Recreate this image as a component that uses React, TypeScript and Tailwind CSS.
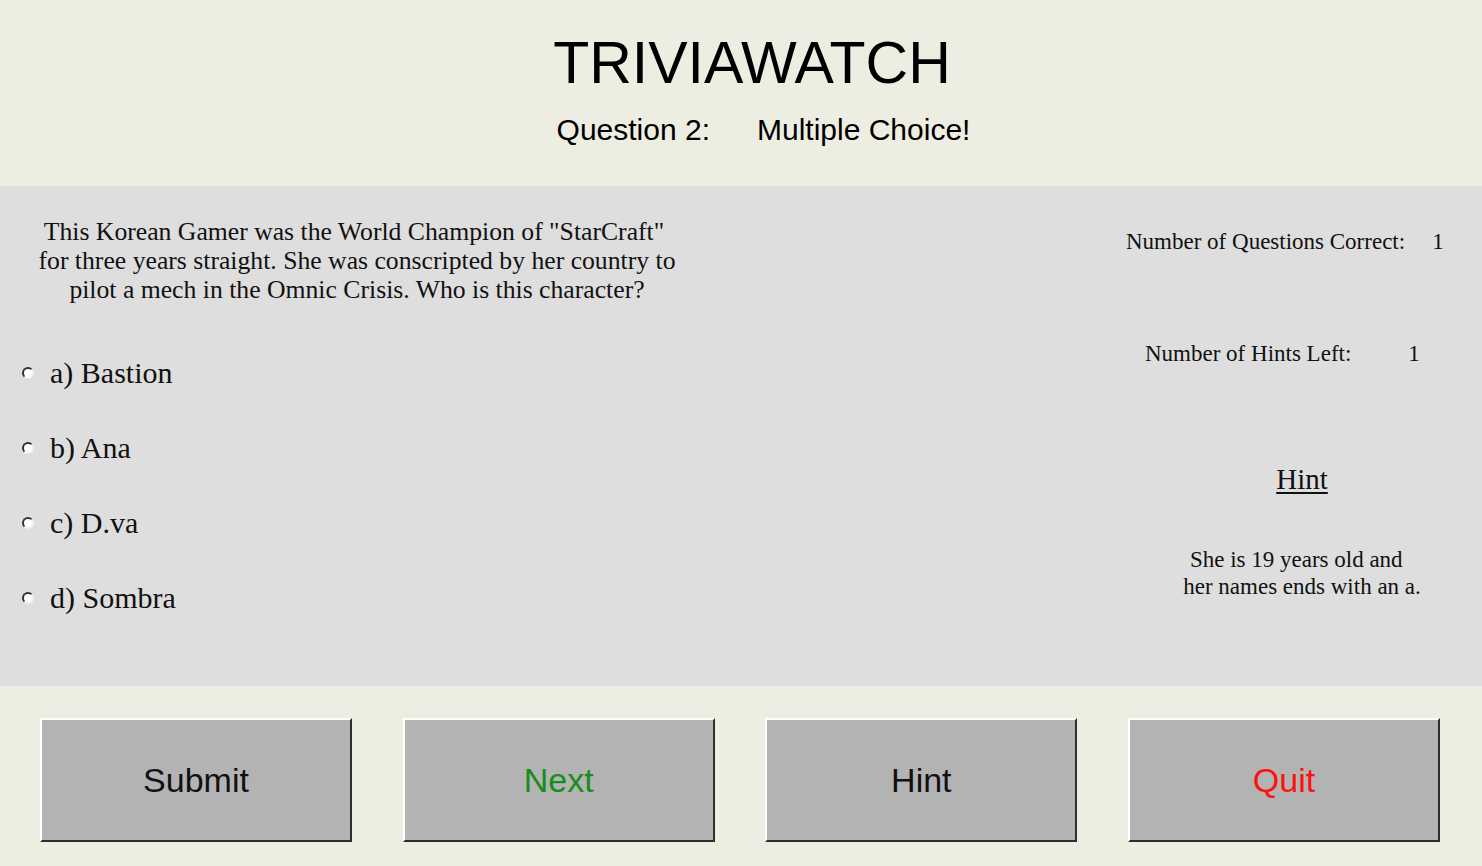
import React from "react";

const serif = "font-['Liberation_Serif',_'Times_New_Roman',_serif]";
const sans = "font-['Liberation_Sans',_Arial,_sans-serif]";

function Radio() {
  return (
    <div className="w-[12px] h-[12px] rounded-full bg-white border-2 border-t-[#333333] border-l-[#333333] border-r-[#f0f0f0] border-b-[#f0f0f0] shrink-0" />
  );
}

const options = ["a) Bastion", "b) Ana", "c) D.va", "d) Sombra"];

const buttons = [
  { label: "Submit", color: "text-[#111111]" },
  { label: "Next", color: "text-[#1a8c1a]" },
  { label: "Hint", color: "text-[#111111]" },
  { label: "Quit", color: "text-[#ff1010]" },
];

export default function App() {
  return (
    <div className="w-[1482px] h-[866px] flex flex-col bg-[#edede1] overflow-hidden text-[#111]">
      {/* Header */}
      <div className={`h-[186px] flex flex-col items-center pt-[34px] pl-[20px] text-black ${sans}`}>
        <div className="text-[59px] leading-none h-[58px] pl-[2px]">TRIVIAWATCH</div>
        <div className="mt-[23px] text-[30px] leading-none h-[30px] flex pl-[25px]">
          <span>Question 2:</span>
          <span className="ml-[47px]">Multiple Choice!</span>
        </div>
      </div>

      {/* Middle panel */}
      <div className={`h-[500px] bg-[#dedede] flex ${serif}`}>
        <div className="w-[714px] flex flex-col">
          <div className="pt-[31px] text-[25.7px] leading-[29px] text-center whitespace-nowrap">
            <div className="pr-[6px]">This Korean Gamer was the World Champion of "StarCraft"</div>
            <div>for three years straight. She was conscripted by her country to</div>
            <div>pilot a mech in the Omnic Crisis. Who is this character?</div>
          </div>
          <div className="mt-[54px] flex flex-col gap-[46px] pl-[22px]">
            {options.map((o) => (
              <div key={o} className="h-[29px] flex items-center">
                <Radio />
                <span className="ml-[16px] text-[30px] leading-none">{o}</span>
              </div>
            ))}
          </div>
        </div>
        <div className="flex-1" />
        <div className="w-[382px] flex flex-col">
          <div className="mt-[44px] pl-[26px] flex text-[23px] leading-none h-[23px] whitespace-nowrap">
            <span>Number of Questions Correct:</span>
            <span className="ml-[27px]">1</span>
          </div>
          <div className="mt-[89px] pl-[45px] flex text-[23px] leading-none h-[23px] whitespace-nowrap">
            <span>Number of Hints Left:</span>
            <span className="ml-[57px]">1</span>
          </div>
          <div className="mt-[100px] pl-[22px] text-center text-[29px] leading-none h-[29px]">
            <span className="underline underline-offset-[3px] decoration-[1.5px]">Hint</span>
          </div>
          <div className="mt-[52px] pl-[22px] text-center text-[23px] leading-[27px] whitespace-pre">
            <div>She is 19 years old and  </div>
            <div>her names ends with an a.</div>
          </div>
        </div>
      </div>

      {/* Footer */}
      <div className={`flex-1 grid grid-cols-4 gap-[50.67px] pl-[40px] pr-[42px] pt-[32px] pb-[24px] ${sans}`}>
        {buttons.map((b) => (
          <div
            key={b.label}
            className="h-[124px] bg-[#b3b3b3] border-t-2 border-l-2 border-t-white border-l-white border-r-2 border-b-2 border-r-[#2e2e2e] border-b-[#2e2e2e] flex items-center justify-center"
          >
            <span className={`text-[34px] leading-none ${b.color}`}>{b.label}</span>
          </div>
        ))}
      </div>
    </div>
  );
}
